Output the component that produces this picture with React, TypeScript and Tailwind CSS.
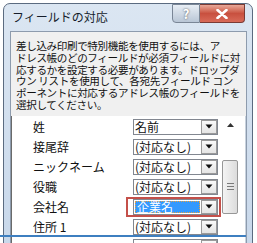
const jp = { fontFamily: '"Noto Sans CJK JP", "Noto Sans", sans-serif' };

const rows = [
  { label: "姓", value: "名前" },
  { label: "接尾辞", value: "(対応なし)" },
  { label: "ニックネーム", value: "(対応なし)" },
  { label: "役職", value: "(対応なし)" },
  { label: "会社名", value: "企業名", selected: true },
  { label: "住所 1", value: "(対応なし)" },
  { label: "", value: "" },
];

function Combo({ value, selected }: { value: string; selected?: boolean }) {
  return (
    <div className="relative flex h-[16px] w-[85px] items-center border border-[#828790] bg-white">
      {selected ? (
        <div className="ml-[1px] flex h-[12px] w-[65px] items-center border border-dotted border-[#e8a040] bg-[#3399ff] pl-[1px] text-[12px] leading-none text-white">
          {value}
        </div>
      ) : (
        <span className="pl-[1px] text-[12px] leading-none text-[#111]">{value}</span>
      )}
      <div className="absolute right-0 top-0 flex h-[14px] w-[16px] items-center justify-center border border-[#9a9a9a] bg-gradient-to-b from-[#fafafa] to-[#e4e4e4]">
        <svg width="8" height="5" viewBox="0 0 8 5">
          <path d="M0.5 0.5 H7.5 L4 4.5 Z" fill="#111" />
        </svg>
      </div>
    </div>
  );
}

export default function App() {
  return (
    <div className="relative h-[243px] w-[257px] overflow-hidden bg-white" style={jp}>
      <div className="ml-[3px] mt-[3px] flex h-[260px] w-[250px] flex-col rounded-t-[7px] border border-[#5b6b80] bg-gradient-to-b from-[#dbe6f2] to-[#c7d7ea]">
        {/* Title bar */}
        <div className="flex h-[27px] items-start">
          <span className="ml-[8px] mt-[7px] text-[12px] leading-none text-[#151c2a]">フィールドの対応</span>
          <div className="ml-auto mr-[7px] flex">
            <div className="flex h-[19px] w-[28px] items-center justify-center rounded-bl-[4px] border border-[#7a8696] bg-gradient-to-b from-[#e8eef5] to-[#b9c6d6] text-[13px] font-bold leading-none text-white [text-shadow:0_0_2px_#444]">
              ?
            </div>
            <div className="flex h-[19px] w-[45px] items-center justify-center rounded-br-[4px] border border-l-0 border-[#7a3a34] bg-gradient-to-b from-[#e8a898] via-[#c8503f] to-[#d86a58]">
              <svg width="12" height="10" viewBox="0 0 12 10">
                <path d="M1.5 1 L10.5 9 M10.5 1 L1.5 9" stroke="#fff" strokeWidth="2.6" strokeLinecap="round" />
                <path d="M1.5 1 L10.5 9 M10.5 1 L1.5 9" stroke="#fff" strokeWidth="1.4" />
              </svg>
            </div>
          </div>
        </div>

        {/* Client area */}
        <div className="ml-[6px] flex w-[237px] flex-1 flex-col border border-[#8d9bad] bg-[#f0f0f0]">
          <div className="px-[5px] pt-[8px] text-[10.6px] leading-[11.8px] tracking-[-0.4px] text-[#111] whitespace-nowrap">
            <div>差し込み印刷で特別機能を使用するには、ア</div>
            <div>ドレス帳のどのフィールドが必須フィールドに対</div>
            <div>応するかを設定する必要があります。ドロップダ</div>
            <div>ウン&nbsp;リストを使用して、各宛先フィールド&nbsp;コン</div>
            <div>ポーネントに対応するアドレス帳のフィールドを</div>
            <div>選択してください。</div>
          </div>

          <div className="mt-[5px] flex flex-1 border-l border-[#6a6a6a] bg-white">
            <div className="flex flex-col pt-[1px]">
              {rows.map((r, i) => (
                <div key={i} className="relative flex h-[20px] items-center">
                  <span className="w-[121px] pl-[21px] text-[12px] leading-none text-[#111]">{r.label}</span>
                  <Combo value={r.value} selected={r.selected} />
                  {r.selected && (
                    <div className="absolute left-[114px] top-0 h-[20px] w-[95px] border-2 border-[#c4504a]" />
                  )}
                </div>
              ))}
            </div>
            {/* Scrollbar */}
            <div className="ml-[4px] flex w-[16px] flex-col items-center pt-[7px]">
              <svg width="7" height="4" viewBox="0 0 7 4">
                <path d="M0 4 H7 L3.5 0 Z" fill="#333" />
              </svg>
              <div className="mt-[33px] flex h-[54px] w-[16px] flex-col items-center justify-center gap-[2px] rounded-[2px] border border-[#979797] bg-gradient-to-r from-[#f4f4f4] to-[#dcdcdc]">
                <div className="h-[1px] w-[7px] bg-[#7a7a7a]" />
                <div className="h-[1px] w-[7px] bg-[#7a7a7a]" />
                <div className="h-[1px] w-[7px] bg-[#7a7a7a]" />
              </div>
            </div>
            <div className="ml-auto w-[1px] bg-[#c8d2de]" />
          </div>
        </div>
      </div>
      <div className="absolute left-0 top-[235px] h-[2px] w-[246px] bg-[#3e7fc0]" />
    </div>
  );
}
